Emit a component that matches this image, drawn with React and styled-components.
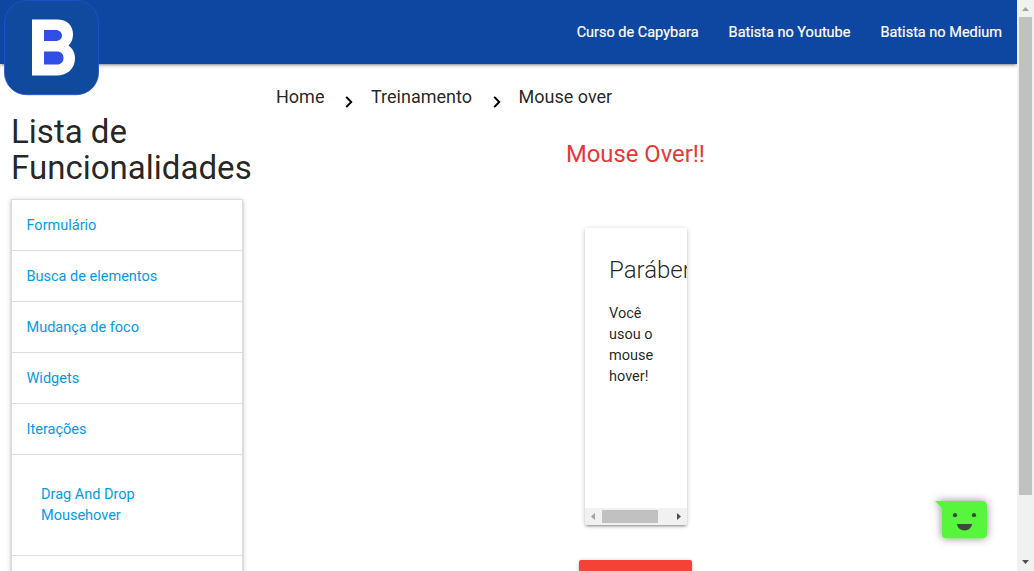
import React from 'react';
import styled, { createGlobalStyle } from 'styled-components';

const Global = createGlobalStyle`
  * { box-sizing: border-box; }
  html, body { margin: 0; height: 571px; overflow: hidden; background: #fff; }
  body { font: 400 14.5px/21px Roboto, sans-serif; color: rgba(0, 0, 0, 0.87); }
  h1, h2, p, ul { margin: 0; padding: 0; font-weight: 400; }
  ul { list-style: none; }
  a { color: #039be5; text-decoration: none; }
`;

const Window = styled.div`
  display: flex;
  width: 1034px;
  height: 571px;
  overflow: hidden;
`;
const Page = styled.div`
  position: relative;
  width: 1017px;
  height: 571px;
  overflow: hidden;
`;
const Header = styled.header`
  position: relative;
  display: flex;
  justify-content: space-between;
  height: 64px;
  background: #0d47a1;
  box-shadow: 0 2px 2px 0 rgba(0, 0, 0, 0.14), 0 3px 1px -2px rgba(0, 0, 0, 0.12), 0 1px 5px 0 rgba(0, 0, 0, 0.2);
`;
const Logo = styled.svg`
  margin-left: 4px;
  width: 95px;
  height: 96px;
  flex: none;
`;
const Nav = styled.nav`
  display: flex;
  line-height: 65px;
`;
const NavLink = styled.a`
  padding: 0 15px;
  color: #fff;
  -webkit-text-stroke: 0.2px #fff;
`;
const Body = styled.div`
  display: flex;
  align-items: flex-start;
`;
const Sidebar = styled.aside`
  width: 254px;
  padding: 50px 11px 0;
`;
const SideTitle = styled.h1`
  font-size: 33.06px;
  line-height: 36px;
`;
const List = styled.ul`
  margin-top: 13px;
  border: 1px solid #ddd;
  border-bottom: 0;
  box-shadow: 0 2px 2px 0 rgba(0, 0, 0, 0.14), 0 3px 1px -2px rgba(0, 0, 0, 0.12), 0 1px 5px 0 rgba(0, 0, 0, 0.2);
`;
const Item = styled.li`
  height: 51px;
  padding: 14.5px;
  border-bottom: 1px solid #ddd;
`;
const SubItems = styled.li`
  display: flex;
  flex-direction: column;
  height: 101px;
  padding: 29px;
  border-bottom: 1px solid #ddd;
`;
const Main = styled.main`
  flex: 1;
  display: flex;
  flex-direction: column;
  padding: 15px 0 0 22px;
`;
const Crumbs = styled.div`
  display: flex;
  align-items: center;
  height: 34px;
  font-size: 18px;
`;
const Chevron = styled.svg`
  width: 24px;
  height: 24px;
  margin: 11px 11px 0 11.6px;
`;
const Title = styled.h2`
  margin: 28px 0 0 290px;
  color: #e53935;
  font-size: 23.8px;
  line-height: 26px;
`;
const Card = styled.section`
  display: flex;
  flex-direction: column;
  width: 102px;
  height: 297px;
  margin: 61px 0 0 309px;
  overflow: hidden;
  border-radius: 2px;
  box-shadow: 0 2px 2px 0 rgba(0, 0, 0, 0.14), 0 3px 1px -2px rgba(0, 0, 0, 0.12), 0 1px 5px 0 rgba(0, 0, 0, 0.2);
`;
const CardContent = styled.div`
  flex: 1;
  padding: 24px;
`;
const CardTitle = styled.span`
  display: block;
  margin-bottom: 15px;
  font-size: 24px;
  font-weight: 300;
  line-height: 36px;
  white-space: nowrap;
`;
const CardBar = styled.div`
  display: flex;
  height: 17px;
  padding: 2px 0;
  background: #f1f1f1;
`;
const CardThumb = styled.div`
  width: 56px;
  background: #c1c1c1;
`;
const BarArrow = styled.svg`
  width: ${(p) => p.$w}px;
  height: 13px;
  flex: none;
`;
const RedButton = styled.button`
  width: 113px;
  height: 36px;
  margin: 35px 0 0 303px;
  border: 0;
  border-radius: 2px;
  background: #f44336;
  box-shadow: 0 2px 2px 0 rgba(0, 0, 0, 0.14), 0 1px 5px 0 rgba(0, 0, 0, 0.2);
`;
const ChatBubble = styled.svg`
  position: absolute;
  left: 920px;
  top: 485px;
  width: 84px;
  height: 76px;
`;
const Scrollbar = styled.div`
  display: flex;
  flex-direction: column;
  align-items: center;
  width: 17px;
  background: #f1f1f1;
`;
const Thumb = styled.div`
  width: 13px;
  height: 478px;
  background: #c1c1c1;
`;
const ScrollArrow = styled.svg`
  width: 17px;
  height: 17px;
  flex: none;
  margin-top: ${(p) => (p.$bottom ? 'auto' : 0)};
`;

const sections = ['Formulário', 'Busca de elementos', 'Mudança de foco', 'Widgets', 'Iterações'];
const links = ['Curso de Capybara', 'Batista no Youtube', 'Batista no Medium'];

const Separator = () => (
  <Chevron viewBox="0 0 24 24">
    <path d="M10.2 6.9 15.2 12l-5 5.1" fill="none" stroke="#000" strokeWidth="2" />
  </Chevron>
);

export default function App() {
  return (
    <>
      <Global />
      <Window>
        <Page>
          <Header>
            <Logo viewBox="0 0 95 96">
              <rect x="0.5" y="0.5" width="94" height="94.2" rx="22" fill="#0f4a9f" stroke="#2450cb" strokeWidth="0.8" />
              <path d="M28 19.5H53C63 19.5 69 25.5 69 34C69 39.5 67 43 64.5 45.5C68.5 48.5 71 52.5 71 58C71 69 63 75.5 53 75.5H28Z" fill="#fff" />
              <path d="M40 30H51.5C55.5 30 58 32.5 58 35.5S55.5 41 51.5 41H40ZM40 51.5H53C57 51.5 59.5 54 59.5 58S57 64.5 53 64.5H40Z" fill="#304fe4" />
            </Logo>
            <Nav>{links.map((l) => <NavLink key={l} href="#">{l}</NavLink>)}</Nav>
          </Header>
          <Body>
            <Sidebar>
              <SideTitle>Lista de Funcionalidades</SideTitle>
              <List>
                {sections.map((s) => <Item key={s}><a href="#">{s}</a></Item>)}
                <SubItems>
                  <a href="#">Drag And Drop</a>
                  <a href="#">Mousehover</a>
                </SubItems>
                <Item />
              </List>
            </Sidebar>
            <Main>
              <Crumbs>
                <span>Home</span><Separator /><span>Treinamento</span><Separator /><span>Mouse over</span>
              </Crumbs>
              <Title>Mouse Over!!</Title>
              <Card>
                <CardContent>
                  <CardTitle>Parábens!</CardTitle>
                  <p>Você usou o mouse hover!</p>
                </CardContent>
                <CardBar>
                  <BarArrow $w={17} viewBox="0 0 17 13"><path d="M6 6.5 10 3v7Z" fill="#a3a3a3" /></BarArrow>
                  <CardThumb />
                  <BarArrow $w={29} viewBox="0 0 29 13"><path d="M23 6.5 19 3v7Z" fill="#505050" /></BarArrow>
                </CardBar>
              </Card>
              <RedButton />
            </Main>
          </Body>
          <ChatBubble viewBox="0 0 84 76">
            <defs>
              <filter id="bubbleShadow" x="-40%" y="-40%" width="180%" height="180%">
                <feDropShadow dx="0" dy="0" stdDeviation="4.5" floodColor="#000" floodOpacity="0.45" />
              </filter>
            </defs>
            <path d="M15 16H62Q67 16 67 21V48.6Q67 53.6 62 53.6H26.6Q21.6 53.6 21.6 48.6V23Z" fill="#58f53e" filter="url(#bubbleShadow)" />
            <circle cx="35" cy="30.2" r="2.1" fill="#3c4a3a" />
            <circle cx="54" cy="30.2" r="2.1" fill="#3c4a3a" />
            <path d="M36.8 39H52.2Q50.5 45.5 44.5 45.5T36.8 39Z" fill="#3c4a3a" />
          </ChatBubble>
        </Page>
        <Scrollbar>
          <ScrollArrow viewBox="0 0 17 17"><path d="M8.5 7 12 11H5Z" fill="#a3a3a3" /></ScrollArrow>
          <Thumb />
          <ScrollArrow $bottom viewBox="0 0 17 17"><path d="M8.5 10 12 6H5Z" fill="#505050" /></ScrollArrow>
        </Scrollbar>
      </Window>
    </>
  );
}
